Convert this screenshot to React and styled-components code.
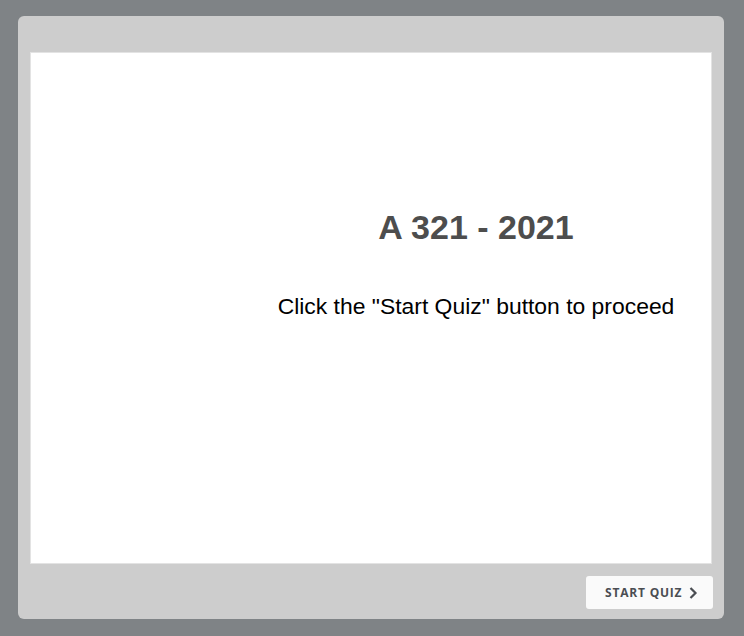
import React from 'react'
import styled, { createGlobalStyle } from 'styled-components'

const Global = createGlobalStyle`
  html, body {
    margin: 0;
    padding: 0;
    background: #7f8386;
  }
  * { box-sizing: border-box; }
`

const App = () => {
  return (
    <>
      <Global />
      <Page>
        <Panel>
          <Stage>
            <Intro>
              <Title>A 321 - 2021</Title>
              <Hint>Click the "Start Quiz" button to proceed</Hint>
            </Intro>
          </Stage>
          <Footer>
            <StartButton type="button">
              START QUIZ
              <Chevron viewBox="0 0 10 14" aria-hidden="true">
                <path d="M2.5 2 L7.5 7 L2.5 12" />
              </Chevron>
            </StartButton>
          </Footer>
        </Panel>
      </Page>
    </>
  )
}

const Page = styled.div`
  width: 744px;
  height: 636px;
  padding: 16px 20px 17px 18px;
  background: #7f8386;
`

const Panel = styled.div`
  display: flex;
  flex-direction: column;
  height: 100%;
  background: #cdcdcd;
  border-radius: 6px;
  padding: 36px 12px 0 12px;
`

const Stage = styled.div`
  height: 512px;
  background: #fff;
  border: 1px solid #e3e3e3;
  padding: 154px 0 0 210px;
`

const Intro = styled.div`
  display: flex;
  flex-direction: column;
  align-items: center;
  font-family: "Liberation Sans", Arial, sans-serif;
`

const Title = styled.h1`
  margin: 0;
  font-size: 34px;
  line-height: 40px;
  font-weight: bold;
  color: #4d4d4d;
`

const Hint = styled.p`
  margin: 46px 0 0 0;
  font-size: 22.9px;
  line-height: 26px;
  color: #000;
`

const Footer = styled.div`
  display: flex;
  justify-content: flex-end;
  padding: 12px 0 0 0;
  margin-right: -1px;
`

const StartButton = styled.button`
  display: flex;
  align-items: center;
  gap: 6px;
  height: 33px;
  width: 127px;
  padding: 0 0 0 19px;
  border: none;
  border-radius: 3px;
  background: #fafafa;
  font-family: "Open Sans", sans-serif;
  font-weight: 700;
  font-size: 12px;
  letter-spacing: 0.8px;
  color: #4a4d52;
  cursor: pointer;
`

const Chevron = styled.svg`
  width: 10px;
  height: 14px;
  fill: none;
  stroke: #4a4d52;
  stroke-width: 2.2;
`

export default App
